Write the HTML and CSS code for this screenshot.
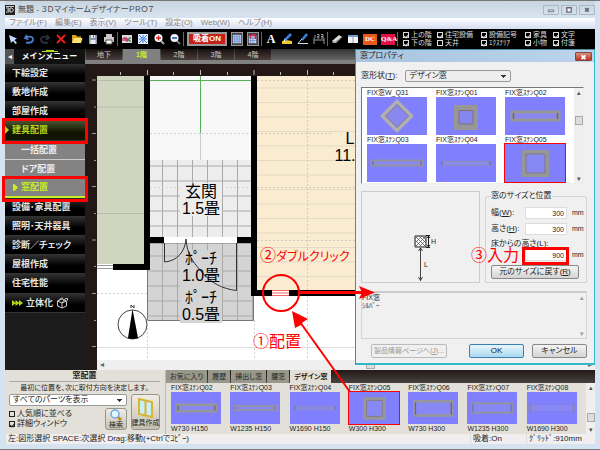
FILE: index.html
```html
<!DOCTYPE html>
<html lang="ja">
<head>
<meta charset="utf-8">
<title>無題 - ３ＤマイホームデザイナーＰＲＯ７</title>
<link rel="stylesheet" href="styles.css">
</head>
<body>
<svg class="defs" aria-hidden="true">
  <symbol id="w31" viewBox="0 0 60 38"><path d="M30 4.500L44.500 19L30 33.500L15.500 19Z" fill="#8888f0" stroke="#b0b0ac" stroke-width="3.500"/><path d="M30 7.500L41.500 19L30 30.500L18.500 19Z" fill="none" stroke="#8a8084"/></symbol>
  <symbol id="w01" viewBox="0 0 60 38"><path d="M18 8H42V33H18Z" fill="#979797"/><path d="M23 13.500H37V27H23Z" fill="#8686f0" stroke="#807078"/></symbol>
  <symbol id="w02" viewBox="0 0 60 38"><path d="M7 15H54V23H7Z" fill="#8888f0" stroke="#979797" stroke-width="3"/><path d="M8.500 16V22M52.500 16V22" stroke="#706468" stroke-width="1.500"/></symbol>
  <symbol id="w03" viewBox="0 0 60 38"><path d="M4.500 16.500H55.500V21.500H4.500Z" fill="#8888f0" stroke="#9494a0" stroke-width="2"/><path d="M6 17V21M54 17V21" stroke="#746a70"/></symbol>
  <symbol id="w04" viewBox="0 0 60 38"><path d="M6 17.500H54V21H6Z" fill="#8888f0" stroke="#9090b0"/><path d="M6 17V21M54 17V21" stroke="#746a78"/></symbol>
  <symbol id="w05" viewBox="0 0 60 38"><path d="M19 8H42V31H19Z" fill="#8888f4" stroke="#979797" stroke-width="4"/><path d="M21 10H40V29H21Z" fill="none" stroke="#807880"/></symbol>
  <symbol id="w06" viewBox="0 0 60 38"><path d="M7.500 11H53V28H7.500Z" fill="#8888f4" stroke="#979797" stroke-width="3"/><path d="M9 12V27M52 12V27" stroke="#706468" stroke-width="1.500"/></symbol>
  <symbol id="w07" viewBox="0 0 60 38"><path d="M5.500 13.500H54.500V24.500H5.500Z" fill="#8888f4" stroke="#9494a0" stroke-width="2"/><path d="M7 14V24M53 14V24" stroke="#746a70"/></symbol>
  <symbol id="w08" viewBox="0 0 60 38"><path d="M4 14.500H56.500V23.500H4Z" fill="#8888f4" stroke="#8080e0"/><path d="M4.500 14V24M56 14V24" stroke="#8c8494" stroke-width="2"/></symbol>
</svg>

<div class="window">
  <header class="titlebar">
    <svg class="appicon" viewBox="0 0 10 10"><path d="M0 0H10V10H0Z" fill="#222"/><path d="M1 3H4V7H1M2 5H4M5 3V7H7L8.500 5L7 3ZM1 1.500H9" fill="none" stroke="#ccc"/></svg>
    <h1>無題 - ３ＤマイホームデザイナーＰＲＯ７</h1>
    <div class="winbuttons">
      <button aria-label="最小化"><svg viewBox="0 0 16 9"><path d="M5 4.500H11V6.500H5Z" fill="#fff" stroke="#667"/></svg></button>
      <button aria-label="最大化"><svg viewBox="0 0 16 9"><path d="M5.500 2H10.500V7H5.500Z" fill="#fff" stroke="#667" stroke-width="1.500"/></svg></button>
      <button aria-label="閉じる"><svg viewBox="0 0 16 9"><path d="M6 2.500L10 6.500M10 2.500L6 6.500" stroke="#667" stroke-width="2"/></svg></button>
    </div>
  </header>
  <nav class="menubar">
    <a href="#">ファイル(F)</a><a href="#">編集(E)</a><a href="#">表示(V)</a><a href="#">ツール(T)</a><a href="#">設定(O)</a><a href="#">Web(W)</a><a href="#">ヘルプ(H)</a>
  </nav>

  <div class="toolbar">
    <button aria-label="選択"><svg viewBox="0 0 12 12"><path d="M2 2L10 5.500L7.500 7L10 10L8.500 11L6 8L4 10Z" fill="#c4dcff"/></svg></button>
    <button aria-label="元に戻す"><svg viewBox="0 0 12 12"><path d="M4 2L2 5L5.500 6.500M2.500 5C6 2.500 10.500 3.500 10 7C9.500 9.500 6 10 3 9.500" fill="none" stroke="#4b80c8" stroke-width="1.800"/></svg></button>
    <button aria-label="やり直し"><svg viewBox="0 0 12 12"><path d="M8 2L10 5L6.500 6.500M9.500 5C6 2.500 1.500 3.500 2 7C2.500 9.500 6 10 9 9.500" fill="none" stroke="#26333f" stroke-width="1.800"/></svg></button>
    <button aria-label="削除"><svg viewBox="0 0 12 12"><path d="M2 2L10 10M10 2L2 10" stroke="#f02018" stroke-width="1.800"/></svg></button>
    <button aria-label="開く"><svg viewBox="0 0 12 12"><path d="M1 2H5L6 3.500H10V10H1Z" fill="#d89c20"/><path d="M3 5H11.500L10 10H1Z" fill="#ffe070"/></svg></button>
    <button aria-label="保存"><svg viewBox="0 0 12 12"><path d="M2 2H10V11H2Z" fill="#8795a8"/><path d="M4 2H8V5H4ZM3.500 7H8.500V11H3.500Z" fill="#e8edf4"/><path d="M6.500 2.500V4.500" stroke="#456"/></svg></button>
    <button aria-label="印刷"><svg viewBox="0 0 12 12"><path d="M3 1H9V5H3ZM1 4H11V9H1Z" fill="#c8c8c8"/><path d="M3 7H9V11H3Z" fill="#fff" stroke="#555"/></svg></button>
    <i class="sep"></i>
    <button aria-label="文字表示"><svg viewBox="0 0 12 12"><path d="M1 2H11V10H1Z" fill="#dcdcdc"/><path d="M2 8V5H4V8M5 4V8H7V6H5" fill="none" stroke="#c00840"/><path d="M10 5H8V8H10" fill="none" stroke="#186838"/></svg></button>
    <button aria-label="全体表示"><svg viewBox="0 0 12 12"><path d="M1 1H11V11H1Z" fill="#e4f0ff"/><path d="M2 2L5 5M10 2L7 5M2 10L5 7M10 10L7 7M6 2V10M2 6H10" stroke="#3878d8"/></svg></button>
    <button aria-label="拡大"><svg viewBox="0 0 12 12"><path d="M8 8L11 11" stroke="#aaa" stroke-width="2"/><circle cx="5.500" cy="5" r="4" fill="#fff"/><path d="M3 5H8M5.500 2.500V7.500" stroke="#d02020" stroke-width="1.500"/></svg></button>
    <button aria-label="縮小"><svg viewBox="0 0 12 12"><path d="M8 8L11 11" stroke="#777" stroke-width="2"/><circle cx="5.500" cy="5" r="4" fill="#eaf2ff"/><path d="M3 5H8" stroke="#2848a0" stroke-width="1.500"/></svg></button>
    <i class="sep"></i>
    <button class="snap">吸着ON</button>
    <button class="boxed" aria-label="グリッド"><svg viewBox="0 0 12 12"><path d="M1 1H11V11H1Z" fill="#c8dcff"/><path d="M3 1V11M5 1V11M7 1V11M9 1V11M1 3H11M1 5H11M1 7H11M1 9H11" stroke="#5c7cb8" stroke-width=".6"/></svg></button>
    <button class="boxed" aria-label="グリッド吸着"><svg viewBox="0 0 12 12"><path d="M1 2H10V11H1Z" fill="#c8dcff"/><path d="M3 2V11M6 2V11M1 5H10M1 8H10" stroke="#5c7cb8" stroke-width=".8"/><path d="M3 5V3Q3 1 6 1T9 3V6" fill="none" stroke="#d82050" stroke-width="2"/></svg></button>
    <i class="sep"></i>
    <button class="letter" aria-label="文字">A</button>
    <button aria-label="塗り"><svg viewBox="0 0 12 12"><path d="M1 8L5 7L11 8V11H1Z" fill="#f0c830"/><path d="M10 1L4 7" stroke="#3a80d8" stroke-width="2.600"/><path d="M4 6L3 9" stroke="#fff"/></svg></button>
    <button aria-label="線"><svg viewBox="0 0 12 12"><path d="M10 1L5 7" stroke="#3a80d8" stroke-width="2.600"/><path d="M5 6L1 10.500H11" fill="none" stroke="#d0d8e0"/></svg></button>
    <button aria-label="寸法"><svg viewBox="0 0 12 12"><path d="M1 11V5M11 11V5M1 7H11M2 2V5M4 1.500H6V3.500H4.500V5H6.500M8 1.500H10V5H8M8 3.500H10" fill="none" stroke="#aaa" stroke-width=".9"/></svg></button>
    <i class="sep"></i>
    <button aria-label="消しゴム"><svg viewBox="0 0 12 12"><path d="M1 8L8 2L11 4L5 10L2 10Z" fill="#ddd"/><path d="M1 8L4 9.500L11 4" fill="none" stroke="#888"/></svg></button>
    <button aria-label="ウィンドウ"><svg viewBox="0 0 12 12"><path d="M1 2H11V10H1Z" fill="#f0f3f8"/><path d="M1 2H11V4H1Z" fill="#7898d0"/><path d="M6 4V10" stroke="#99a"/></svg></button>
    <button class="chip dc">DC</button>
    <button class="chip qa">Q&amp;A</button>
    <i class="sep"></i>
    <div class="filters">
      <label><input type="checkbox" checked>上の階</label><label><input type="checkbox" checked>住宅設備</label><label><input type="checkbox" checked>設備記号</label><label><input type="checkbox" checked>家具</label><label><input type="checkbox" checked>文字</label>
      <label><input type="checkbox" checked>下の階</label><label><input type="checkbox">天井</label><label><input type="checkbox" checked>ｴｸｽﾃﾘｱ</label><label><input type="checkbox" checked>小物</label><label><input type="checkbox" checked>付箋</label>
    </div>
  </div>

  <div class="main">
    <aside class="side">
      <div class="sidehead"><button aria-label="たたむ">◂</button><h2>メインメニュー</h2></div>
      <nav class="sidemenu">
        <a href="#">下絵設定</a>
        <a href="#">敷地作成</a>
        <a href="#">部屋作成</a>
        <a href="#" class="open">建具配置</a>
        <a href="#" class="sub">一括配置</a>
        <a href="#" class="sub">ドア配置</a>
        <a href="#" class="sub current"><svg viewBox="0 0 6 8"><path d="M0 0H2L6 4L2 8H0Z" fill="#c8f020"/></svg>窓配置</a>
        <a href="#">設備･家具配置</a>
        <a href="#">照明･天井器具</a>
        <a href="#">診断／チェック</a>
        <a href="#">屋根作成</a>
        <a href="#">住宅性能</a>
        <a href="#" class="solid"><svg class="fast" viewBox="0 0 11 6"><path d="M0 0L4 3L0 6ZM3.500 0L7.500 3L3.500 6ZM7 0L11 3L7 6Z" fill="#b4d818"/></svg>立体化<svg class="cube" viewBox="0 0 12 12"><path d="M1.500 4L6 2L10.500 4V9L6 11L1.500 9ZM1.500 4L6 6L10.500 4M6 6V11M6 6L9.500 1.500H11.500V3.500M2 9C0 6 3 1 7 1" fill="none" stroke="#ccc"/></svg></a>
      </nav>
    </aside>

    <section class="work">
      <div class="floors">
        <button>地下</button><button class="on">1階</button><button>2階</button><button>3階</button><button>4階</button>
      </div>
      <svg class="plan" role="img" aria-label="平面図">
        <defs>
          <pattern id="tile" x="147" y="165.500" width="15" height="15" patternUnits="userSpaceOnUse"><path d="M0 .5H15M.5 0V15" stroke="#aaa"/></pattern>
          <pattern id="floor" x="0" y="87.500" width="15" height="14.500" patternUnits="userSpaceOnUse"><path d="M0 .5H15" stroke="#e3d9c4"/></pattern>
        </defs>
        <g transform="translate(-85 -64)">
          <path d="M97 76H1200V900H97Z" fill="#fff"/>
          <path d="M120.500 72V75M147.500 70V75M173.500 72V75M200.500 70V75M227.500 72V75M254 70V75M280.500 72V75M307.500 70V75M333.500 72V75" stroke="#bbb"/>
          <path d="M92 80H96M94 107H96M92 133.500H96M94 160.500H96M92 186.500H96M94 213.500H96M92 240H96M94 266.500H96M92 293.500H96M94 320.500H96M92 346.500H96" stroke="#999"/>
          <path d="M97 76H144V264H97Z" fill="#d0d5bf"/>
          <path d="M97 80.500H144M97 107H144M97 213.500H144" stroke="#b8bcac"/>
          <path d="M150 76H251V160H150Z" fill="#f8f8f8"/>
          <path d="M150 160H251V237H150Z" fill="#ededed"/><path d="M150 160H251V237H150Z" fill="url(#tile)"/>
          <path d="M147.500 243H253.500V320.500H147.500Z" fill="#d4d4d4"/><path d="M147.500 243H253.500V320.500H147.500Z" fill="url(#tile)" stroke="#777"/>
          <path d="M150 133.500H251M150 187.500H251M97 293.500H147M147.500 320V360M254.500 320V360M307.500 296V360" stroke="#d4d4d4" stroke-dasharray="2 2"/>
          <path d="M97 347.500H356" stroke="#ddd"/>
          <path d="M150 80.500H251M200.500 76V133" stroke="#58b058"/><path d="M200.500 133V160" stroke="#ccc"/>
          <path d="M257 76H1200V290H257Z" fill="#f9ecd0"/><path d="M257 76H1200V290H257Z" fill="url(#floor)"/>
          <path d="M307.500 76V290M257 133.500H333M257 187.500H356M257 240.500H356M257 80.500H356" stroke="#d2cabb" stroke-dasharray="2 2"/>
          <path d="M164 237H237V243H164Z" fill="#fff"/>
          <path d="M144 76H150V270H113V264H144ZM150 237H164V243H150ZM251 76H257V290H272V296H251V243H237V237H251ZM289 290H1200V296H289Z"/>
          <path d="M97 265.500H113M97 268.500H113" stroke="#999"/>
          <path d="M272 290H289V296H272Z" fill="#fff"/><path d="M272 290.500H289M272 295.500H289M272 293H289" stroke="#e66"/>
          <path d="M180 183H222V216H180Z" fill="#ededed"/><path d="M180 250H222V323H180Z" fill="#d4d4d4"/>
          <path d="M164.500 243V262C177 261 185 252 186 239C187 254 193 262 200 270C210 283 223 289 236.500 290.500V243" fill="none" stroke="#333"/>
          <g class="rooms">
            <text x="201" y="197">玄関</text><text x="201" y="214">1.5畳</text>
            <text x="201" y="264">ﾎﾟｰﾁ</text><text x="201" y="281">1.0畳</text>
            <text x="201" y="303">ﾎﾟｰﾁ</text><text x="201" y="320">0.5畳</text>
            <text x="350" y="144">L</text><text x="345" y="161">11.</text>
          </g>
          <circle cx="132.500" cy="324.500" r="14.500" fill="none" stroke="#444"/>
          <path d="M132.500 309L138 338Q132 340 128 338Z"/><path d="M131 308V305L134 308V305" fill="none" stroke="#333"/>
        </g>
      </svg>
      <div class="hscroll"><span>◂</span><i></i><span>▸</span></div>
    </section>
  </div>

  <div class="bottom">
    <section class="parts">
      <h3>窓配置</h3>
      <p>最初に位置を、次に取付方向を決定します。</p>
      <div class="partsgrid">
        <select aria-label="パーツ"><option>すべてのパーツを表示</option></select>
        <div class="opts">
          <div class="ticks">
            <label><input type="checkbox">人気順に並べる</label>
            <label><input type="checkbox" checked>詳細ウィンドウ</label>
          </div>
          <button class="find"><svg viewBox="0 0 14 12"><path d="M9 8L12 11" stroke="#c88818" stroke-width="2.500"/><circle cx="6" cy="5" r="4" fill="#e4f6ff" stroke="#70a8e0" stroke-width="1.500"/></svg>検索</button>
        </div>
        <button class="make"><svg viewBox="0 0 18 22"><path d="M2 2L15 5V20L2 17Z" fill="#c8f0f8" stroke="#d8b430" stroke-width="2"/><path d="M8.500 3.500V18.500" stroke="#d8b430" stroke-width="2"/></svg>建具作成</button>
      </div>
    </section>
    <section class="catalog">
      <div class="tabs"><button>お気に入り</button><button>履歴</button><button>掃出し窓</button><button>腰窓</button><button class="on">デザイン窓</button></div>
      <div class="shelf">
        <ul>
          <li>FIX窓ｽﾃﾝQ02<svg viewBox="0 0 60 38"><use href="#w02"/></svg>W730 H150</li>
          <li>FIX窓ｽﾃﾝQ03<svg viewBox="0 0 60 38"><use href="#w03"/></svg>W1235 H150</li>
          <li>FIX窓ｽﾃﾝQ04<svg viewBox="0 0 60 38"><use href="#w04"/></svg>W1690 H150</li>
          <li class="picked">FIX窓ｽﾃﾝQ05<svg viewBox="0 0 60 38"><use href="#w05"/></svg>W300 H300</li>
          <li>FIX窓ｽﾃﾝQ06<svg viewBox="0 0 60 38"><use href="#w06"/></svg>W730 H300</li>
          <li>FIX窓ｽﾃﾝQ07<svg viewBox="0 0 60 38"><use href="#w07"/></svg>W1235 H300</li>
          <li>FIX窓ｽﾃﾝQ08<svg viewBox="0 0 60 38"><use href="#w08"/></svg>W1690 H300</li>
        </ul>
        <div class="vscroll low"><span>▴</span><i></i><span>▾</span></div>
      </div>
    </section>
  </div>

  <footer class="status"><span>左:図形選択 SPACE:次選択 Drag:移動(+Ctrlでｺﾋﾟｰ)</span><span>吸着:On</span><span>ｸﾞﾘｯﾄﾞ:910mm</span></footer>
</div>

<div class="dialog" role="dialog" aria-label="窓プロパティ">
  <div class="dlgtitle"><h2>窓プロパティ</h2><button aria-label="閉じる"><svg viewBox="0 0 16 9"><path d="M6 2.500L10 6.500M10 2.500L6 6.500" stroke="#fff" stroke-width="2"/></svg></button></div>
  <form class="dlgbody">
    <div class="shape"><label for="shape">窓形状(<u>T</u>):</label><select id="shape"><option>デザイン窓</option></select></div>
    <div class="list">
      <ul>
        <li>FIX窓W_Q31<svg viewBox="0 0 60 38"><use href="#w31"/></svg></li>
        <li>FIX窓ｽﾃﾝQ01<svg viewBox="0 0 60 38"><use href="#w01"/></svg></li>
        <li>FIX窓ｽﾃﾝQ02<svg viewBox="0 0 60 38"><use href="#w02"/></svg></li>
        <li>FIX窓ｽﾃﾝQ03<svg viewBox="0 0 60 38"><use href="#w03"/></svg></li>
        <li>FIX窓ｽﾃﾝQ04<svg viewBox="0 0 60 38"><use href="#w04"/></svg></li>
        <li class="picked">FIX窓ｽﾃﾝQ05<svg viewBox="0 0 60 38"><use href="#w05"/></svg></li>
      </ul>
      <div class="vscroll"><span>▴</span><i></i><span>▾</span></div>
    </div>
    <div class="details">
      <div class="preview">
        <svg viewBox="0 0 24 48" aria-label="寸法図">
          <path d="M2 2H13V13H2Z" fill="#fff" stroke="#222"/><path d="M2 5L5 2M2 9L9 2M2 13L13 2M6 13L13 6M10 13L13 10M5 13L2 10M9 13L2 6M13 13L2 2M13 9L6 2M13 6L9 2" stroke="#555" stroke-width=".8"/>
          <path d="M13 1.500H17M13 13.500H17M15.500 2V13M14 4L15.500 2L17 4M14 11L15.500 13L17 11" fill="none" stroke="#222"/>
          <path d="M7.500 14V47M5.500 17L7.500 14L9.500 17M5.500 43L7.500 46.500L9.500 43" fill="none" stroke="#444"/>
          <text x="18" y="10">H</text><text x="11" y="33">L</text>
        </svg>
      </div>
      <fieldset>
        <legend>窓のサイズと位置</legend>
        <div class="field"><label for="w">幅(<u>W</u>):</label><input id="w" type="text" value="300"><span>mm</span></div>
        <div class="field"><label for="h">高さ(<u>H</u>):</label><input id="h" type="text" value="300"><span>mm</span></div>
        <label for="l">床からの高さ(<u>L</u>):</label>
        <div class="field"><b></b><input id="l" type="text" value="900"><span>mm</span></div>
        <button type="button">元のサイズに戻す(<u>R</u>)</button>
      </fieldset>
    </div>
    <div class="note"><p>FIX窓<br>ｼﾙﾊﾞｰ</p><div class="vscroll flat"><span>▴</span><span>▾</span></div></div>
    <div class="actions"><button type="button" class="info" disabled>製品情報ページへ(<u>J</u>)...</button><button type="button" class="ok">OK</button><button type="button">キャンセル</button></div>
  </form>
</div>

<svg class="marks" aria-label="手順">
  <g fill="none" stroke="#f00">
    <path d="M3.500 119.500H86.500V142.500H3.500ZM3.500 177.500H86.500V200.500H3.500ZM523.500 248.500H567.500V263.500H523.500Z" stroke-width="3"/>
    <circle cx="281" cy="293" r="18" stroke-width="2"/>
    <path d="M350 392L300 322" stroke-width="2"/><path d="M299 292.500H363" stroke-width="3"/>
  </g>
  <path d="M292 311L308 319L303 322L301 325L295 328ZM375 292.500L359 286L362 292.500L359 299Z" fill="#f00"/>
  <g class="steps">
    <text x="253" y="347">①配置</text>
    <text x="260" y="261">②<tspan class="kana">ダブルクリック</tspan></text>
    <text x="471" y="261">③入力</text>
  </g>
</svg>
</body>
</html>
```
FILE: styles.css
```css
* { box-sizing: border-box; }
body {
  margin: 0;
  font: 8px/10px "Liberation Sans", "Noto Sans CJK JP", sans-serif;
  font-feature-settings: "palt";
  color: #222;
  overflow: hidden;
}
h1, h2, h3, p, ul { margin: 0; padding: 0; font: inherit; font-weight: normal; list-style: none; }
button, select, input { font: inherit; color: inherit; margin: 0; padding: 0; border: 0; background: none; font-feature-settings: inherit; white-space: nowrap; }
a { color: inherit; text-decoration: none; }
svg { display: block; }
.defs { position: absolute; width: 0; height: 0; }

.window {
  display: flex;
  flex-direction: column;
  height: 100vh;
  padding: 0 5px 5px;
  background: #d5e2f0;
  border: 1px solid #777;
  border-width: 1px 0 1px 0;
}
.titlebar { display: flex; align-items: center; height: 17px; gap: 3px; background: linear-gradient(#c8d4e0, #d8e4f0); }
.appicon { width: 10px; height: 10px; }
.titlebar h1 { flex: 1; color: #444; }
.winbuttons { display: flex; gap: 2px; }
.winbuttons button { width: 16px; height: 10px; border: 1px solid #aab6c4; border-radius: 1px; }
.menubar { display: flex; gap: 8px; height: 11px; padding-left: 4px; background: linear-gradient(#fff, #d4dcf0); color: #888; }

.toolbar { display: flex; align-items: center; height: 20px; padding: 0 2px; gap: 4px; background: #000; color: #ddd; }
.toolbar > button { flex: none; width: 12px; height: 14px; }
.toolbar svg { width: 100%; height: 12px; }
.toolbar .sep { width: 1px; height: 14px; background: #666; margin: 0 -1px 0 -2px; }
.toolbar .snap { width: 40px; background: #c82018; border: 2px solid #999; color: #fff; font-weight: bold; line-height: 8px; }
.toolbar .boxed { border: 1px solid #999; background: #444; }
.toolbar .letter { font: bold 12px/14px "Liberation Serif", serif; color: #fff; }
.toolbar .chip { font: bold 7px/11px "Liberation Serif", serif; width: 14px; height: 11px; color: #fff; }
.toolbar .dc { background: #e85818; }
.toolbar .qa { background: #e01048; }
.filters { display: grid; grid-template-columns: 34px 44px 44px 28px 34px; padding-left: 2px; font-size: 7px; line-height: 8px; }
label input[type="checkbox"] { appearance: none; flex: none; width: 6px; height: 6px; border: 1px solid currentColor; display: grid; place-items: center; }
label input:checked::before { content: ""; width: 2px; height: 4px; border: solid currentColor; border-width: 0 1px 1px 0; transform: rotate(40deg); }
.filters label, .ticks label { display: flex; align-items: center; gap: 2px; white-space: nowrap; }

.main { flex: 1; display: flex; min-height: 0; background: #231815; }
.side { width: 80px; display: flex; flex-direction: column; background: #1c1c1c; }
.sidehead { display: flex; height: 15px; background: #111; color: #fff; }
.sidehead button { width: 9px; background: #555; line-height: 10px; }
.sidehead h2 { flex: 1; text-align: center; font-weight: bold; font-feature-settings: normal; line-height: 16px; background: linear-gradient(#b4d818, #b4d818) 50% 1px / 8px 1px no-repeat, linear-gradient(#b4d818, #b4d818) 50% 2px / 16px 1px no-repeat; }
.sidemenu { flex: 1; display: grid; grid-template-rows: repeat(13, 1fr) 3fr; font-size: 9px; font-weight: bold; color: #e4e4e4; }
.sidemenu a { display: flex; align-items: center; gap: 3px; padding-left: 7px; min-height: 0; border-bottom: 1px solid #333; background: linear-gradient(#303030, #000 60%); white-space: nowrap; }
.sidemenu .open { color: #b4d818; background: linear-gradient(#4c5430, #101400 60%); }
.sidemenu .open::before { content: ""; margin-left: -7px; border: solid transparent; border-width: 4px 0 4px 4px; border-left-color: #b4d818; }
.sidemenu .sub { padding-left: 16px; background: #838383; border-color: #ccc; color: #eee; }
.sidemenu .current { padding-left: 8px; color: #c8f020; border-bottom: 2px solid #c8f020; }
.sidemenu .current svg { width: 5px; height: 7px; }
.sidemenu .fast { width: 11px; height: 6px; }
.sidemenu .cube { width: 12px; height: 12px; }

.work { flex: 1; display: flex; flex-direction: column; min-width: 0; }
.floors { display: flex; gap: 1px; height: 15px; padding-left: 1px; border-bottom: 4px solid #808080; background: linear-gradient(#333, #666); }
.floors button { width: 36px; background: linear-gradient(#181010, #483e3c); color: #ccc; font-size: 7px; }
.floors .on { width: 37px; background: #808080; color: #c8f020; font-weight: bold; }
.plan { flex: 1; width: 100%; min-height: 0; }
.rooms { font-size: 16px; text-anchor: middle; font-family: "Liberation Sans", "Noto Sans CJK JP", sans-serif; font-feature-settings: normal; }
.hscroll { display: flex; align-items: center; justify-content: space-between; height: 10px; margin-left: 12px; padding: 0 3px; background: #efefef; color: #666; }
.hscroll i { width: 9px; height: 8px; margin-left: 48px; border: 1px solid #aaa; background: #ddd; }

.bottom { display: flex; height: 64px; background: #e2e0d8; }
.parts { width: 160px; padding: 1px 5px 0 4px; }
.parts h3 { text-align: center; font-weight: bold; border-bottom: 1px solid #aaa; }
.parts p { text-align: center; font-size: 7px; line-height: 12px; }
.partsgrid { display: grid; grid-template-columns: 1fr 29px; gap: 2px 4px; }
select { appearance: none; border: 1px solid #999; border-radius: 2px; height: 12px; padding: 0 3px; line-height: 10px; background: linear-gradient(#333, #333) right 4px top 4px / 5px 1px no-repeat, linear-gradient(#333, #333) right 5px top 5px / 3px 1px no-repeat, linear-gradient(#333, #333) right 6px top 6px / 1px 1px no-repeat, #fff; }
.opts { display: flex; justify-content: space-between; }
.ticks { display: grid; align-content: center; line-height: 10px; }
.find, .make { display: flex; flex-direction: column; align-items: center; justify-content: center; border: 1px solid #98968c; border-radius: 3px; background: linear-gradient(#efede4, #c4c0b0); font-size: 7px; line-height: 8px; }
.find { width: 22px; height: 22px; }
.find svg { width: 14px; height: 12px; }
.make { grid-area: 1 / 2 / 3 / 3; }
.make svg { width: 18px; height: 22px; }

.catalog { flex: 1; display: flex; flex-direction: column; min-width: 0; border-left: 1px solid #bbb; }
.tabs { display: flex; gap: 1px; height: 13px; background: linear-gradient(#231815, #484240); font-size: 7px; }
.tabs button { padding: 0 4px; background: #98988a; color: #222; }
.tabs .on { padding: 0 4px; background: #e2e0d8; font-weight: bold; }
.shelf { flex: 1; display: flex; min-height: 0; }
.shelf ul { flex: 1; display: grid; grid-template-columns: repeat(7, 1fr); padding-left: 5px; font-size: 7px; line-height: 9px; }
.shelf li { min-width: 0; white-space: nowrap; }
.shelf li svg { width: 50px; height: 32px; background: #8080ff; }
.vscroll { display: flex; flex-direction: column; align-items: center; justify-content: space-between; width: 9px; background: #efefef; color: #555; font-size: 7px; line-height: 9px; }
.vscroll i { width: 8px; height: 9px; margin-bottom: 30px; border: 1px solid #aaa; background: #ddd; }
.low i { margin: 18px 0 0; }
.flat { background: none; color: #999; }
.picked svg { outline: 1px solid #f00; }

.status { display: flex; height: 10px; background: #f0eeee; color: #222; }
.status span:first-child { flex: 1; }
.status span { padding-left: 2px; border-left: 1px solid #ddd; }
.status span:nth-child(2) { width: 56px; }
.status span:nth-child(3) { width: 69px; }

.dialog { position: absolute; top: 49px; left: 355px; right: 5px; border: 1px solid #4a8ca0; border-right-color: #30b8c8; border-bottom: 2px solid #30b8c8; background: #f0f0f0; }
.dlgtitle { display: flex; justify-content: space-between; align-items: center; height: 12px; padding: 0 2px 0 4px; background: linear-gradient(90deg, #a8c4e0, #bcd4ec); }
.dlgtitle button { width: 17px; height: 9px; background: linear-gradient(#d89080, #b83820); border: 1px solid #844; border-radius: 1px; }
.dlgbody { padding: 8px 7px 5px 5px; }
.shape { display: flex; align-items: center; gap: 8px; margin-bottom: 5px; }
.shape select { width: 106px; background-color: #eee; }
.list { display: flex; height: 97px; margin-right: 3px; border: 1px solid #999; border-color: #777 #eee #eee #777; background: #fff; }
.list ul { flex: 1; display: grid; grid-template-columns: repeat(3, 1fr); grid-auto-rows: 47px; padding-left: 5px; font-size: 7px; line-height: 9px; }
.list li { white-space: nowrap; }
.list li svg { width: 60px; height: 38px; background: #8080ff; }
.details { display: grid; grid-template-columns: 119px 1fr; gap: 5px; margin-top: 7px; }
.preview { display: grid; place-items: center; border: 1px solid #ccc; }
.preview svg { width: 24px; height: 48px; margin: 42px 0 0 8px; }
.preview text { font-size: 7px; fill: #222; }
fieldset { margin: 0; padding: 6px 5px 3px; border: 1px solid #d4d4d4; border-radius: 2px; min-width: 0; }
legend { padding: 0; }
fieldset > label { display: block; }
.field { display: grid; grid-template-columns: 34px 42px 1fr; align-items: center; margin-bottom: 4px; }
.field input { width: 100%; height: 12px; padding-right: 2px; border: 1px solid #ddd; background: #fff; text-align: right; font-size: 7px; }
.field span { padding-left: 5px; font-size: 7px; }
.dlgbody button { height: 14px; border: 1px solid #888; border-radius: 2px; background: linear-gradient(#f4f4f4, #d4d4d4); line-height: 10px; }
fieldset button { width: 88px; }
.note { display: flex; justify-content: space-between; height: 48px; margin-top: 8px; border: 1px solid #d4d4d4; border-top: 2px solid #ccc; font-size: 7px; line-height: 8px; }
.note p { padding-top: 1px; }
.actions { display: flex; gap: 8px; margin: 5px 0 0 10px; }
.actions button { width: 55px; }
.actions .info { width: 76px; margin-right: auto; border-color: #bbb; background: none; color: #999; font-size: 7px; }
.actions .ok { border-color: #3c7fb1; background: linear-gradient(#e8f6fd, #a8d8f0); }

.marks { position: absolute; inset: 0; width: 100%; height: 100%; pointer-events: none; }
.steps { font-size: 16px; fill: #f00; font-family: "Noto Sans CJK JP", sans-serif; }
.steps .kana { font-size: 12px; }
```
